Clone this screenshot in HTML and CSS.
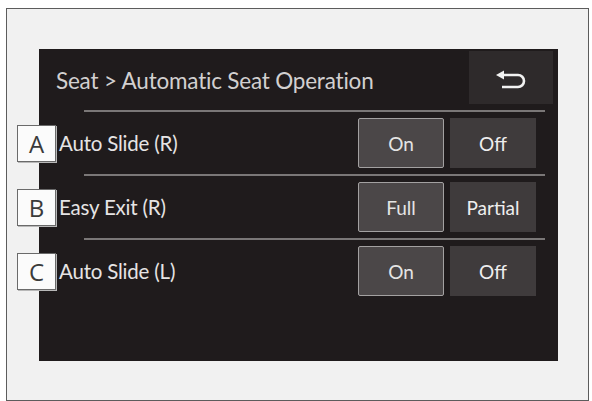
FILE: index.html
```html
<!DOCTYPE html>
<html lang="en">
<head>
    <meta charset="UTF-8">
    <meta name="viewport" content="width=device-width, initial-scale=1.0">
    <title>Automatic Seat Operation</title>
    <link rel="stylesheet" href="styles.css">
</head>
<body>
    <div class="frame">
        <section class="screen">
            <header class="screen-header">
                <h1 class="title">Seat &gt; Automatic Seat Operation</h1>
                <button class="back-button" aria-label="Back">
                    <svg width="30" height="20" viewBox="0 0 30 20">
                        <path d="M0 6 L8 1.5 L8 10.5 Z" fill="#f2f2f2"/>
                        <path d="M7 6 H22 A6 6 0 0 1 22 18 H6" fill="none" stroke="#f2f2f2" stroke-width="2.6"/>
                    </svg>
                </button>
            </header>
            <div class="rule"></div>

            <div class="row">
                <span class="callout">A</span>
                <span class="label">Auto Slide (R)</span>
                <div class="choices">
                    <button class="choice selected">On</button>
                    <button class="choice">Off</button>
                </div>
            </div>
            <div class="rule"></div>

            <div class="row">
                <span class="callout">B</span>
                <span class="label">Easy Exit (R)</span>
                <div class="choices">
                    <button class="choice selected">Full</button>
                    <button class="choice">Partial</button>
                </div>
            </div>
            <div class="rule"></div>

            <div class="row">
                <span class="callout">C</span>
                <span class="label">Auto Slide (L)</span>
                <div class="choices">
                    <button class="choice selected">On</button>
                    <button class="choice">Off</button>
                </div>
            </div>
        </section>
    </div>
</body>
</html>
```

FILE: styles.css
```css
* {
    box-sizing: border-box;
    margin: 0;
    padding: 0;
}

body {
    font-family: Lato, "Open Sans", sans-serif;
    background: #fff;
    color: #333;
}

/* Page frame around the display */
.frame {
    margin: 8px 3px 0 6px;
    height: 393px;
    border: 1.5px solid #5c5c5c;
    background: #f1f1f1;
    padding: 40px 30px 0 32px;
}

.screen {
    background: #1f1b1c;
    height: 312px;
    padding-right: 5px;
}

/* Title bar */
.screen-header {
    display: flex;
    align-items: flex-start;
    height: 61px;
    padding-top: 2px;
}

.title {
    flex: 1;
    margin: 0;
    padding: 19px 0 0 17px;
    font-size: 22.5px;
    font-weight: 400;
    color: #d2d0d0;
    line-height: 1;
    letter-spacing: -0.2px;
}

.back-button {
    width: 84px;
    height: 53px;
    background: #2e2a2b;
    border: none;
    display: flex;
    align-items: center;
    justify-content: center;
    padding-top: 3px;
}

.rule {
    height: 2px;
    margin: 0 8px 0 45px;
    background: #7a7777;
}

/* Setting rows */
.row {
    display: flex;
    align-items: center;
    height: 62px;
    padding-right: 17px;
}

.callout {
    width: 39px;
    height: 37px;
    margin-left: -22px;
    margin-right: 3px;
    background: #fbfbfb;
    border: 1.5px solid #6a6a6a;
    box-shadow: 1px 1px 0 #b8b8b8;
    color: #3a3a3a;
    font-family: "Open Sans", sans-serif;
    font-size: 24px;
    font-weight: 400;
    display: flex;
    align-items: center;
    justify-content: center;
}

.label {
    color: #e6e4e4;
    font-size: 20.5px;
    letter-spacing: -0.2px;
}

.choices {
    display: flex;
    gap: 6px;
    margin-left: auto;
}

.choice {
    width: 86px;
    height: 50px;
    background: #3f3b3c;
    border: 1.5px solid transparent;
    color: #eeeeee;
    font-family: Lato, sans-serif;
    font-size: 19px;
}

.choice.selected {
    background: #4b4748;
    border-color: #a3a1a1;
    border-radius: 2px;
    color: #e4e4e4;
}
```
